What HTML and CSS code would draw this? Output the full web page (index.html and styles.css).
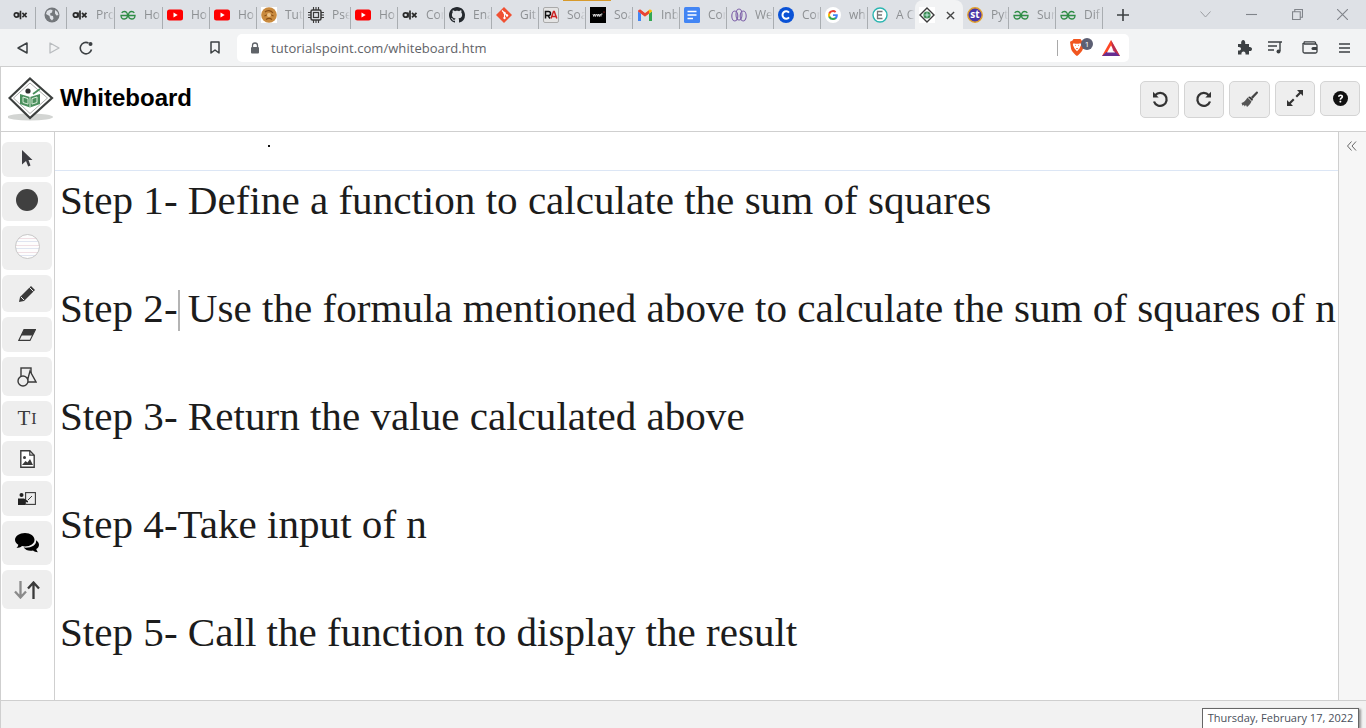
FILE: index.html
```html
<!DOCTYPE html>
<html lang="en">
<head>
<meta charset="utf-8">
<title>Whiteboard</title>
<link rel="stylesheet" href="styles.css">
</head>
<body>
<svg class="defs" width="0" height="0" aria-hidden="true">
  <symbol id="i-alx" viewBox="0 0 16 16"><circle cx="3.600" cy="8" r="2.200" fill="none" stroke="#2b2b2b" stroke-width="1.800"/><path d="M6 5.600v4.800M8 3.500v9" stroke="#2b2b2b" stroke-width="1.700"/><path d="M10 5.800l4.500 4.600M14.500 5.800l-4.500 4.600" stroke="#2b2b2b" stroke-width="1.800"/></symbol>
  <symbol id="i-globe" viewBox="0 0 16 16"><circle cx="8" cy="8" r="7.500" fill="#73777b"/><path d="M3 4l3-1.500 2.500.5-.5 2.500-2 1 .5 2 2.500.5.500 2.500-1.500 2-2-2-.5-2.500L2 7zM11 3l2.500 2 1 3-2 .5-1.500-2z" fill="#dee1e6"/></symbol>
  <symbol id="i-gfg" viewBox="0 0 16 16"><g fill="none" stroke="#2f8d46" stroke-width="1.300"><path d="M8.300 8.500H15C15 10.600 13.600 12 11.700 12 9.700 12 8.500 10.400 8.500 8.300 8.500 6 9.800 4.500 11.700 4.500 12.800 4.500 13.700 5 14.300 5.900"/><path d="M7.700 8.500H1C1 10.600 2.400 12 4.300 12 6.300 12 7.500 10.400 7.500 8.300 7.500 6 6.200 4.500 4.300 4.500 3.200 4.500 2.300 5 1.700 5.900"/></g></symbol>
  <symbol id="i-yt" viewBox="0 0 16 16"><rect x="0" y="2.500" width="16" height="11" rx="2.500" fill="#f00"/><path d="M6.500 5.500l4.200 2.500-4.200 2.500z" fill="#fff"/></symbol>
  <symbol id="i-cookie" viewBox="0 0 16 16"><rect width="16" height="16" fill="#fff"/><circle cx="8" cy="8" r="7.800" fill="#c98a3e"/><path d="M4 5c2-2 6-2 8 1M3.500 9c3-2 6-2 9 0M5 12.500c2-1.500 4-1.500 6 0" fill="none" stroke="#8a4f16" stroke-width="1.100"/><circle cx="8" cy="8" r="2" fill="#eec48a"/></symbol>
  <symbol id="i-chip" viewBox="0 0 16 16"><rect x="3" y="3" width="10" height="10" rx="1.500" fill="none" stroke="#3a3a3a" stroke-width="1.500"/><rect x="5.500" y="5.500" width="5" height="5" fill="none" stroke="#3a3a3a" stroke-width="1.200"/><path d="M5.500 0v3M8 0v3M10.500 0v3M5.500 13v3M8 13v3M10.500 13v3M0 5.500h3M0 8h3M0 10.500h3M13 5.500h3M13 8h3M13 10.500h3" stroke="#3a3a3a" stroke-width="1.100"/></symbol>
  <symbol id="i-github" viewBox="0 0 16 16"><path fill="#24292e" d="M8 0C3.580 0 0 3.580 0 8c0 3.540 2.290 6.530 5.470 7.590.4.070.55-.17.55-.38 0-.19-.01-.82-.01-1.490-2.010.37-2.530-.49-2.690-.94-.09-.23-.48-.94-.82-1.130-.28-.15-.68-.52-.01-.53.630-.01 1.080.58 1.230.82.720 1.210 1.870.87 2.330.66.070-.52.280-.87.510-1.070-1.780-.2-3.640-.89-3.640-3.950 0-.87.310-1.590.820-2.150-.08-.2-.36-1.020.08-2.120 0 0 .67-.21 2.200.82.640-.18 1.320-.27 2-.27s1.360.09 2 .27c1.530-1.040 2.200-.82 2.200-.82.44 1.100.16 1.920.08 2.120.51.560.82 1.270.82 2.150 0 3.070-1.870 3.750-3.650 3.950.29.250.54.730.54 1.480 0 1.070-.01 1.930-.01 2.200 0 .21.15.46.55.38A8.010 8.010 0 0 0 16 8c0-4.420-3.580-8-8-8z"/></symbol>
  <symbol id="i-git" viewBox="0 0 16 16"><path d="M8 0l8 8-8 8-8-8z" fill="#f05133"/><path d="M6 3.500l2.500 2.500v5M8.500 6l2.500 2.500" stroke="#fff" stroke-width="1.100" fill="none"/><circle cx="8.500" cy="6" r="1.200" fill="#fff"/><circle cx="8.500" cy="11" r="1.200" fill="#fff"/><circle cx="11" cy="8.500" r="1.200" fill="#fff"/></symbol>
  <symbol id="i-ra" viewBox="0 0 16 16"><rect x=".5" y=".5" width="15" height="15" rx="1.500" fill="#e4e4e4" stroke="#aaa"/><path d="M2.500 11.500V4.500h3a2 2 0 0 1 0 4h-3M5 8.500l2 3" fill="none" stroke="#111" stroke-width="1.500"/><path d="M8 11.500l2.500-7h.8l2.500 7M9 9.500h4" fill="none" stroke="#c22" stroke-width="1.500"/></symbol>
  <symbol id="i-wwr" viewBox="0 0 16 16"><rect width="16" height="16" fill="#000"/><path d="M3 7l.8 2.500L4.800 7l.8 2.500L6.500 7M7 7l.8 2.500L8.800 7l.8 2.500L10.500 7M11 9.500V7h1.500" fill="none" stroke="#fff" stroke-width=".8"/><circle cx="14" cy="5" r=".6" fill="#e33"/></symbol>
  <symbol id="i-gmail" viewBox="0 0 16 16"><path d="M1 14V4.500L4 6.500V14z" fill="#4285f4"/><path d="M12 14V6.500l3-2V14z" fill="#34a853"/><path d="M1 4.500C1 2.800 3 2 4 3l4 3.200L8 9.500 1 4.500z" fill="#ea4335"/><path d="M15 4.500c0-1.700-2-2.500-3-1.500L8 6.200V9.500z" fill="#fbbc04"/><path d="M4 6.500l4 3 4-3v-3L8 6.200 4 3.500z" fill="#ea4335"/></symbol>
  <symbol id="i-docs" viewBox="0 0 16 16"><rect width="16" height="16" rx="1.500" fill="#4285f4"/><path d="M3.500 4.500h9M3.500 8h9M3.500 11.500h5.500" stroke="#fff" stroke-width="1.600"/></symbol>
  <symbol id="i-web" viewBox="0 0 16 16"><g fill="none" stroke="#7b5ea7" stroke-width="1.100"><ellipse cx="3.800" cy="9" rx="3" ry="5"/><ellipse cx="8" cy="7.500" rx="3" ry="5.500"/><ellipse cx="12.200" cy="9" rx="3" ry="5"/></g></symbol>
  <symbol id="i-coin" viewBox="0 0 16 16"><circle cx="8" cy="8" r="8" fill="#0a52d6"/><path d="M11 5.600a3.700 3.700 0 1 0 0 4.800" fill="none" stroke="#fff" stroke-width="2"/></symbol>
  <symbol id="i-google" viewBox="0 0 16 16"><circle cx="8" cy="8" r="8" fill="#fff"/><path d="M12.800 8.200c0-.4 0-.7-.1-1H8v1.900h2.700a2.400 2.400 0 0 1-1 1.500v1.300h1.600c1-.9 1.500-2.200 1.500-3.700z" fill="#4285f4"/><path d="M8 13c1.300 0 2.400-.4 3.300-1.100l-1.600-1.300c-.4.300-1 .5-1.700.5-1.300 0-2.400-.9-2.800-2H3.500v1.300A5 5 0 0 0 8 13z" fill="#34a853"/><path d="M5.200 9.100a3 3 0 0 1 0-2V5.800H3.500a5 5 0 0 0 0 4.500z" fill="#fbbc05"/><path d="M8 5c.7 0 1.400.3 1.900.8l1.400-1.400A5 5 0 0 0 3.500 5.800l1.700 1.300c.4-1.200 1.500-2.100 2.800-2.100z" fill="#ea4335"/></symbol>
  <symbol id="i-e" viewBox="0 0 16 16"><circle cx="8" cy="8" r="7" fill="#fff" stroke="#2ab5b0" stroke-width="1.400"/><path d="M10.500 4.500h-5v7h5M5.500 8h4.500" fill="none" stroke="#777" stroke-width="1.300"/></symbol>
  <symbol id="i-tp" viewBox="0 0 16 16"><rect width="16" height="16" fill="#fff"/><path d="M8 1l7 7-7 7-7-7z" fill="none" stroke="#3a3a3a" stroke-width="1.400"/><circle cx="8" cy="8" r="3.600" fill="#3d8b53"/><path d="M5.500 8h5M8 5.500v5" stroke="#dff" stroke-width=".8"/></symbol>
  <symbol id="i-st" viewBox="0 0 16 16"><circle cx="8" cy="8" r="7.200" fill="#4a36a8" stroke="#e2a02c" stroke-width="1.400"/></symbol>
</svg>

<div class="tabstrip">
  <div class="tab tab-first"><svg class="fav"><use href="#i-alx"/></svg></div>
  <div class="tab tab-pin"><svg class="fav"><use href="#i-globe"/></svg></div>
  <div class="tab tab-wide"><svg class="fav"><use href="#i-alx"/></svg><span class="tt">Pro</span></div>
  <div class="tab tab-wide"><svg class="fav"><use href="#i-gfg"/></svg><span class="tt">Ho</span></div>
  <div class="tab"><svg class="fav"><use href="#i-yt"/></svg><span class="tt">Ho</span></div>
  <div class="tab"><svg class="fav"><use href="#i-yt"/></svg><span class="tt">Ho</span></div>
  <div class="tab"><svg class="fav"><use href="#i-cookie"/></svg><span class="tt">Tut</span></div>
  <div class="tab"><svg class="fav"><use href="#i-chip"/></svg><span class="tt">Pse</span></div>
  <div class="tab"><svg class="fav"><use href="#i-yt"/></svg><span class="tt">Ho</span></div>
  <div class="tab"><svg class="fav"><use href="#i-alx"/></svg><span class="tt">Cor</span></div>
  <div class="tab"><svg class="fav"><use href="#i-github"/></svg><span class="tt">Ena</span></div>
  <div class="tab"><svg class="fav"><use href="#i-git"/></svg><span class="tt">Git</span></div>
  <div class="tab"><svg class="fav"><use href="#i-ra"/></svg><span class="tt">Soa</span></div>
  <div class="tab"><svg class="fav"><use href="#i-wwr"/></svg><span class="tt">Soa</span></div>
  <div class="tab"><svg class="fav"><use href="#i-gmail"/></svg><span class="tt">Inb</span></div>
  <div class="tab"><svg class="fav"><use href="#i-docs"/></svg><span class="tt">Cor</span></div>
  <div class="tab"><svg class="fav"><use href="#i-web"/></svg><span class="tt">We</span></div>
  <div class="tab"><svg class="fav"><use href="#i-coin"/></svg><span class="tt">Cor</span></div>
  <div class="tab"><svg class="fav"><use href="#i-google"/></svg><span class="tt">wh</span></div>
  <div class="tab tab-nosep"><svg class="fav"><use href="#i-e"/></svg><span class="tt">A C</span></div>
  <div class="tab tab-active"><svg class="fav"><use href="#i-tp"/></svg>
    <svg class="tab-close" viewBox="0 0 10 10"><path d="M1 1l8 8M9 1l-8 8" stroke="#444" stroke-width="1.500"/></svg></div>
  <div class="tab tab-narrow"><span class="fav-st"><svg class="fav"><use href="#i-st"/></svg><span class="st-label">st</span></span><span class="tt">Pyt</span></div>
  <div class="tab"><svg class="fav"><use href="#i-gfg"/></svg><span class="tt">Sur</span></div>
  <div class="tab"><svg class="fav"><use href="#i-gfg"/></svg><span class="tt">Dif</span></div>
  <svg class="newtab" viewBox="0 0 12 12"><path d="M6 0v12M0 6h12" stroke="#3c4043" stroke-width="1.600"/></svg>
  <svg class="tabsearch" viewBox="0 0 11 7"><path d="M.5.500L5.500 6 10.500.500" fill="none" stroke="#9a9da1" stroke-width="1"/></svg>
  <svg class="win win-min" viewBox="0 0 10 10"><path d="M0 5h10" stroke="#80848a"/></svg>
  <svg class="win win-max" viewBox="0 0 10 10"><path d="M.5 2.500h7v7h-7zM2.500 2.500v-2h7v7h-2" fill="none" stroke="#80848a"/></svg>
  <svg class="win win-close" viewBox="0 0 10 10"><path d="M0 0l10 10M10 0L0 10" stroke="#80848a"/></svg>
  <div class="loadbar"></div>
</div>

<div class="toolbar">
  <svg class="tb tb-back" viewBox="0 0 11 12"><path d="M10 1v10L1 6z" fill="none" stroke="#3c4043" stroke-width="1.500" stroke-linejoin="round"/></svg>
  <svg class="tb tb-fwd" viewBox="0 0 11 12"><path d="M1 1v10l9-5z" fill="none" stroke="#b9bcbf" stroke-width="1.300" stroke-linejoin="round"/></svg>
  <svg class="tb tb-reload" viewBox="0 0 14 14"><path d="M12.500 8.500A5.700 5.700 0 1 1 9.500 2" fill="none" stroke="#3c4043" stroke-width="1.600"/><circle cx="11.500" cy="3" r="2" fill="#3c4043"/></svg>
  <svg class="tb tb-mark" viewBox="0 0 10 13"><path d="M1 1h8v11L5 9l-4 3z" fill="none" stroke="#3c4043" stroke-width="1.500" stroke-linejoin="round"/></svg>
  <div class="omnibox">
    <svg class="lock" viewBox="0 0 10 12"><path d="M2.500 5V3.500a2.500 2.500 0 0 1 5 0V5" fill="none" stroke="#5f6368" stroke-width="1.300"/><rect x="1" y="5" width="8" height="6.500" rx="1" fill="#5f6368"/></svg>
    <span class="url">tutorialspoint.com/whiteboard.htm</span>
    <span class="omni-sep"></span>
    <span class="brave">
      <svg class="brave-icon" viewBox="0 0 14 16" preserveAspectRatio="none"><path d="M3.500 0h7l1 1.300L14 2.500l-1 6.500c-.5 2.500-4 6-6 7-2-1-5.500-4.500-6-7L0 2.500l2.500-1.200z" fill="#f1561f"/><path d="M3.500 4l2 .5h3l2-.5.700 1.500L9.500 9 7 11.500 4.500 9 2.800 5.500z" fill="#fff"/><path d="M5.200 6h.8M8 6h.8M6 9h2" stroke="#f1561f" stroke-width=".8"/></svg>
      <span class="badge">1</span>
    </span>
    <svg class="bat" viewBox="0 0 18 16"><path d="M9 0l9 16H0z" fill="#ff4724"/><path d="M0 16l4.500-4h9l4.500 4z" fill="#662d91"/><path d="M9 5.500l-4 7h8z" fill="#fff"/><path d="M18 16l-9-16 2 11 2.500 1z" fill="#9e1f63" opacity=".7"/></svg>
  </div>
  <svg class="tb tb-ext" viewBox="0 0 15 15"><path d="M1 4h3.200C3.800 1.500 5 0 6.200 0s2.400 1.500 2 4H12v3c2-.4 3 .8 3 2s-1 2.500-3 2v3.500H8.500c.4-2-.8-3-2-3s-2.500 1-2 3H1v-4c2 .4 3-.6 3-1.700S3 6.500 1 7z" fill="#3c4043"/></svg>
  <svg class="tb tb-media" viewBox="0 0 15 13"><path d="M0 1h14M0 5h9M0 9h6" stroke="#3c4043" stroke-width="1.400"/><path d="M12 1v9" stroke="#3c4043" stroke-width="1.400"/><circle cx="10.500" cy="10.500" r="2" fill="#3c4043"/></svg>
  <svg class="tb tb-wallet" viewBox="0 0 16 13"><path d="M13.500 3H2.500A1.500 1.500 0 0 1 2.500.8h10a1 1 0 0 1 1 1V3zM1 2v8.500A1.500 1.500 0 0 0 2.500 12h11a1.500 1.500 0 0 0 1.500-1.500V4.500A1.500 1.500 0 0 0 13.500 3" fill="none" stroke="#3c4043" stroke-width="1.300"/><path d="M15 6h-4a1.500 1.500 0 0 0 0 3h4z" fill="#3c4043"/></svg>
  <svg class="tb tb-menu" viewBox="0 0 11 10"><path d="M0 1h11M0 5h11M0 9h11" stroke="#3c4043" stroke-width="1.500"/></svg>
</div>

<div class="app">
  <header class="app-head">
    <svg class="logo" viewBox="0 0 46 46">
      <ellipse cx="22" cy="40" rx="23" ry="3.500" fill="#d3d5d3"/>
      <path d="M22 1.500L44 21 22 41 1.500 21z" fill="#fff" stroke="#3c3f3e" stroke-width="2.200"/>
      <path d="M22 6L39.500 21 22 36.500 5.500 21z" fill="none" stroke="#9a9c9b" stroke-width=".8"/>
      <circle cx="20" cy="14" r="2.600" fill="#2f2f2f"/>
      <path d="M12 17l10 3 10-3v10l-10 3.500L12 27z" fill="#4a8f5d"/>
      <path d="M22 20v10.500M15 20l5 1.600v5.500l-5-1.600zM29 20l-5 1.600v5.500l5-1.600z" fill="none" stroke="#d9ecd9" stroke-width="1"/>
      <path d="M25 17l7-5" stroke="#4a8f5d" stroke-width="1.800"/>
    </svg>
    <h1 class="app-title">Whiteboard</h1>
    <div class="head-tools">
      <button class="hbtn hbtn-tall hbtn-39" aria-label="Undo"><svg viewBox="0 0 18 18" width="18" height="18"><path d="M4.200 5.200A6.500 6.500 0 1 1 3 11.500" fill="none" stroke="#333" stroke-width="2.300"/><path d="M2 1.800v5.700h5.700z" fill="#333"/></svg></button>
      <button class="hbtn hbtn-tall" aria-label="Redo"><svg viewBox="0 0 18 18" width="18" height="18"><path d="M13.800 5.200A6.500 6.500 0 1 0 15 11.500" fill="none" stroke="#333" stroke-width="2.300"/><path d="M16 1.800v5.700h-5.700z" fill="#333"/></svg></button>
      <button class="hbtn hbtn-tall hbtn-41" aria-label="Clear"><svg viewBox="0 0 18 18" width="18" height="18"><path d="M10 7l5.500-5.500a1.300 1.300 0 0 1 1.500 1.500L11.500 9z" fill="#444"/><path d="M9 6.500l3 3-1 1.500-4-4z" fill="#333"/><path d="M6.500 7.500l4 4c-1 2.500-3 4.500-4.500 5.500L5 15l-1.500 1.500-.5-1.800-1.500 1L.5 13c2.500-.7 4.500-3 6-5.500z" fill="#555"/></svg></button>
      <button class="hbtn" aria-label="Fullscreen"><svg viewBox="0 0 18 18" width="18" height="18"><path d="M11 1h6v6l-2.200-2.200L11 8.500 9.500 7l3.700-3.800z" fill="#333"/><path d="M7 17H1v-6l2.200 2.200L7 9.500 8.500 11l-3.700 3.800z" fill="#333"/></svg></button>
      <button class="hbtn" aria-label="Help"><svg viewBox="0 0 16 16" width="15" height="15"><circle cx="8" cy="8" r="8" fill="#111"/><path d="M5.300 6.200C5.400 4.600 6.600 3.700 8.100 3.700c1.600 0 2.700 1 2.700 2.300 0 1.900-2.100 1.900-2.100 3.300H7c0-2.300 2-2.300 2-3.300 0-.5-.4-.8-.9-.8-.6 0-1 .4-1.100 1z" fill="#fff"/><rect x="6.900" y="10.300" width="1.900" height="1.900" rx=".4" fill="#fff"/></svg></button>
    </div>
  </header>

  <div class="app-body">
    <nav class="side">
      <button class="sbtn h35 lift" aria-label="Select"><svg viewBox="0 0 12 17" width="12" height="17"><path d="M1 0l10.500 10H7.500L9.500 15.500l-2.300 1L5 11 1 14.500z" fill="#3d3d42"/></svg></button>
      <button class="sbtn h39 lift" aria-label="Color"><span class="dot"></span></button>
      <button class="sbtn h44 lift-more" aria-label="Background"><span class="bgdot"></span></button>
      <button class="sbtn h37" aria-label="Pen"><svg viewBox="0 0 18 18" width="18" height="18"><path d="M13 1l4 4L6 16l-5 1 1-5z" fill="#3a3a3a"/><path d="M11.500 2.500l4 4M3 12l3 3" stroke="#eee" stroke-width="1"/></svg></button>
      <button class="sbtn h35" aria-label="Eraser"><svg viewBox="0 0 18 12" width="18" height="12"><path d="M6 .6h11.400L12 11.400H.8z" fill="none" stroke="#3a3a3a" stroke-width="1.100"/><path d="M6 .6h11.400L14.500 6.500H3.200z" fill="#3a3a3a"/></svg></button>
      <button class="sbtn h39" aria-label="Shapes"><svg viewBox="0 0 20 20" width="20" height="20"><rect x="4" y="1" width="10" height="10" fill="none" stroke="#3a3a3a" stroke-width="1.400"/><path d="M13 4l6 11h-9z" fill="#eee" stroke="#3a3a3a" stroke-width="1.400"/><circle cx="6" cy="14" r="5" fill="#eee" stroke="#3a3a3a" stroke-width="1.400"/></svg></button>
      <button class="sbtn h35 sbtn-text" aria-label="Text">T<span class="ibar">I</span></button>
      <button class="sbtn h35" aria-label="Image"><svg viewBox="0 0 15 18" width="15" height="18"><path d="M.8.800h9l4.400 4.400V17.200H.8z" fill="#fff" stroke="#3a3a3a" stroke-width="1.400"/><path d="M9.800.800v4.400h4.400" fill="none" stroke="#3a3a3a" stroke-width="1.200"/><circle cx="4.500" cy="7.500" r="1.500" fill="#3a3a3a"/><path d="M2 15l3.500-4 2 1.500L10 9l3 6z" fill="#3a3a3a"/></svg></button>
      <button class="sbtn h35" aria-label="Presenter"><svg viewBox="0 0 18 14" width="18" height="14"><rect x="7.600" y=".6" width="9.800" height="11.800" fill="none" stroke="#3a3a3a" stroke-width="1.100"/><circle cx="3.500" cy="3" r="2" fill="#222"/><path d="M0 6.500h6L10 9v1.500L7 9.500V13H0z" fill="#222"/><path d="M10 8l4-4" stroke="#3a3a3a"/></svg></button>
      <button class="sbtn h44" aria-label="Chat"><svg viewBox="0 0 24 20" width="24" height="20"><path d="M10 0c5.500 0 9.500 3 9.500 6.800S15.500 13.500 10 13.500c-1 0-2-.1-3-.4C5.500 14.500 3.500 15 1.500 15c1-1 1.700-2.200 1.800-3.300C1.200 10.500 0 8.800 0 6.800 0 3 4.500 0 10 0z" fill="#000"/><path d="M21 7.200c1.800 1.100 3 2.700 3 4.500 0 1.800-1 3.300-2.700 4.400.1 1 .8 2.200 1.700 3.100-2 0-3.700-.5-5-1.700-4 .9-7.600-.5-9.300-3 6.500.8 13.500-2.300 12.300-7.300z" fill="#000"/></svg></button>
      <button class="sbtn h39" aria-label="Swap"><svg viewBox="0 0 26 18" width="26" height="18"><path d="M6.500 0v16M1 10.500l5.500 6 5.500-6" fill="none" stroke="#8a8a8a" stroke-width="2.300"/><path d="M19.500 18V2M14 7.500l5.500-6 5.500 6" fill="none" stroke="#3a3a3a" stroke-width="2.300"/></svg></button>
    </nav>
    <main class="board">
      <div class="rule"></div>
      <span class="speck"></span>
      <p class="line">Step 1- Define a function to calculate the sum of squares</p>
      <p class="line">Step 2-<span class="caret"></span> Use the formula mentioned above to calculate the sum of squares of n</p>
      <p class="line">Step 3- Return the value calculated above</p>
      <p class="line">Step 4-Take input of n</p>
      <p class="line">Step 5- Call the function to display the result</p>
    </main>
    <aside class="rail"><svg class="rail-arrow" viewBox="0 0 10 10"><path d="M4.500.500L.500 5l4 4.500M9 .500L5 5l4 4.500" fill="none" stroke="#666" stroke-width="1"/></svg></aside>
  </div>

  <footer class="app-foot"><div class="datebox">Thursday, February 17, 2022</div></footer>
</div>
</body>
</html>
```
FILE: styles.css
```css
* { box-sizing: border-box; }
html, body { margin: 0; height: 100%; overflow: hidden; }
body { width: 1366px; height: 728px; display: flex; flex-direction: column; font-family: "Liberation Sans", Arial, sans-serif; background: #fff; }
.defs { position: absolute; }

/* tab strip */
.tabstrip { position: relative; height: 29px; flex: none; display: flex; align-items: flex-end; background: #dee1e6; }
.loadbar { position: absolute; left: 563px; top: 0; width: 48px; height: 1px; background: #d79a2b; }
.tab { width: 47px; height: 22px; flex: none; display: flex; align-items: flex-start; padding-left: 4px; border-right: 1px solid #a9adb1; overflow: hidden; }
.tab-first { width: 36px; padding-left: 13px; }
.tab-first .fav { width: 15px; }
.tab-pin { width: 31px; padding-left: 8px; }
.tab-wide { width: 48px; padding-left: 5px; }
.tab-narrow { width: 46px; }
.tab-nosep { border-right: 0; }
.tab-active { width: 48px; height: 29px; border: 0; padding-top: 7px; background: #f2f3f4; border-radius: 8px 8px 0 0; }
.fav { width: 16px; height: 16px; flex: none; display: block; }
.tt { margin-left: 8px; font: 12px/16px "Open Sans", sans-serif; color: #8d9093; white-space: nowrap; overflow: hidden; flex: 1 1 0; -webkit-mask-image: linear-gradient(90deg, #000 65%, transparent); mask-image: linear-gradient(90deg, #000 65%, transparent); }
.tab-close { width: 9px; height: 9px; margin: 4px 0 0 11px; flex: none; }
.fav-st { position: relative; flex: none; width: 16px; height: 16px; }
.st-label { position: absolute; inset: 0; text-align: center; font: 700 10px/15px "Open Sans", sans-serif; color: #fff; }
.newtab { width: 12px; height: 12px; margin: 0 0 8px 14px; flex: none; }
.tabsearch { width: 11px; height: 7px; margin: 0 0 11px 71px; flex: none; }
.win { width: 11px; height: 11px; flex: none; margin-bottom: 9px; }
.win-min { margin-left: 35px; }
.win-max { margin-left: 35px; }
.win-close { margin-left: 34px; }

/* toolbar */
.toolbar { height: 37px; flex: none; display: flex; align-items: center; background: #f2f3f4; }
.tb { flex: none; display: block; }
.tb-back { width: 11px; height: 12px; margin-left: 17px; }
.tb-fwd { width: 11px; height: 12px; margin-left: 21px; }
.tb-reload { width: 14px; height: 14px; margin-left: 19px; }
.tb-mark { width: 10px; height: 13px; margin-left: 117px; }
.omnibox { width: 892px; height: 28px; margin-left: 17px; display: flex; align-items: center; flex: none; background: #fff; border-radius: 5px; }
.lock { width: 10px; height: 12px; margin-left: 13px; flex: none; }
.url { margin-left: 11px; font: 13px/16px "Open Sans", sans-serif; letter-spacing: .05px; color: #5f6368; white-space: nowrap; }
.omni-sep { width: 1px; height: 16px; margin-left: auto; background: #a9a9a9; }
.brave { position: relative; width: 14px; height: 17px; margin-left: 12px; flex: none; }
.brave-icon { width: 14px; height: 17px; display: block; }
.badge { position: absolute; left: 11px; top: -1px; width: 12px; height: 12px; border-radius: 50%; background: #5c5f73; color: #fff; font: 8px/12px "Open Sans", sans-serif; text-align: center; }
.bat { width: 18px; height: 16px; margin: 0 9px 0 18px; flex: none; }
.tb-ext { width: 15px; height: 15px; margin-left: 108px; }
.tb-media { width: 15px; height: 13px; margin-left: 16px; }
.tb-wallet { width: 16px; height: 13px; margin-left: 19px; }
.tb-menu { width: 11px; height: 10px; margin-left: 21px; }

/* app */
.app { flex: 1; display: flex; flex-direction: column; min-height: 0; border-top: 1px solid #cfcfcf; border-left: 1px solid #cfcfcf; }
.app-head { height: 65px; flex: none; display: flex; align-items: center; padding: 0 6px 0 7px; border-bottom: 1px solid #cfcfcf; }
.logo { width: 46px; height: 46px; flex: none; margin-top: 1px; }
.app-title { margin: 0 0 3px 6px; font: 700 24px/30px "Liberation Sans", Arial, sans-serif; color: #000; }
.head-tools { margin-left: auto; display: flex; align-items: flex-start; gap: 5px; }
.hbtn { width: 40px; height: 35px; padding: 0; display: flex; align-items: center; justify-content: center; background: #eee; border: 1px solid #d4d4d4; border-radius: 5px; }
.hbtn-tall { height: 37px; }
.hbtn-39 { width: 39px; }
.hbtn-41 { width: 41px; }
.app-body { flex: 1; display: flex; min-height: 0; }
.side { width: 54px; flex: none; display: flex; flex-direction: column; gap: 5px; padding: 10px 0 0 1px; border-right: 1px solid #cfcfcf; }
.sbtn { width: 50px; flex: none; padding: 0; display: flex; align-items: center; justify-content: center; background: #eee; border: 0; border-radius: 6px; }
.lift { padding-bottom: 3px; }
.lift-more { padding-bottom: 4px; }
.h35 { height: 35px; }
.h37 { height: 37px; }
.h39 { height: 39px; }
.h44 { height: 44px; }
.dot { width: 22px; height: 22px; border-radius: 50%; background: #404040; }
.bgdot { width: 25px; height: 25px; border-radius: 50%; border: 1px solid #c8c8c8; background: repeating-linear-gradient(180deg, #fdfdfd 0 3px, #f0dfe4 3px 4px, #fdfdfd 4px 6px, #dfe4f0 6px 7px); }
.sbtn-text { font: 21px/1 "Liberation Serif", serif; color: #3a3a3a; }
.ibar { font-size: 16px; margin-left: 1px; }
.board { position: relative; flex: 1; min-width: 0; overflow: hidden; padding-top: 39px; }
.rule { position: absolute; left: 0; right: 0; top: 38px; height: 1px; background: #dce6f5; }
.speck { position: absolute; left: 213px; top: 13px; width: 2px; height: 2px; background: #111; }
.line { margin: 0 0 0 5px; height: 108px; font: 41.1px/58px "Liberation Serif", "Times New Roman", serif; color: #1c1c1c; white-space: nowrap; }
.caret { display: inline-block; width: 2px; height: 41px; margin-right: -2px; background: #b4b4b4; vertical-align: -9px; }
.rail { width: 28px; flex: none; border-left: 1px solid #cfcfcf; background: #f6f6f6; padding: 9px 0 0 8px; }
.rail-arrow { width: 10px; height: 10px; display: block; }
.app-foot { height: 28px; flex: none; display: flex; justify-content: flex-end; align-items: flex-end; padding-right: 7px; background: #f2f2f2; border-top: 1px solid #cfcfcf; }
.datebox { width: 157px; height: 20px; background: #fff; border: 1px solid #666; border-bottom: 0; box-shadow: 2px 1px 2px #999; font: 11px/18px "Open Sans", sans-serif; color: #4a4f5a; text-align: center; white-space: nowrap; }
```
